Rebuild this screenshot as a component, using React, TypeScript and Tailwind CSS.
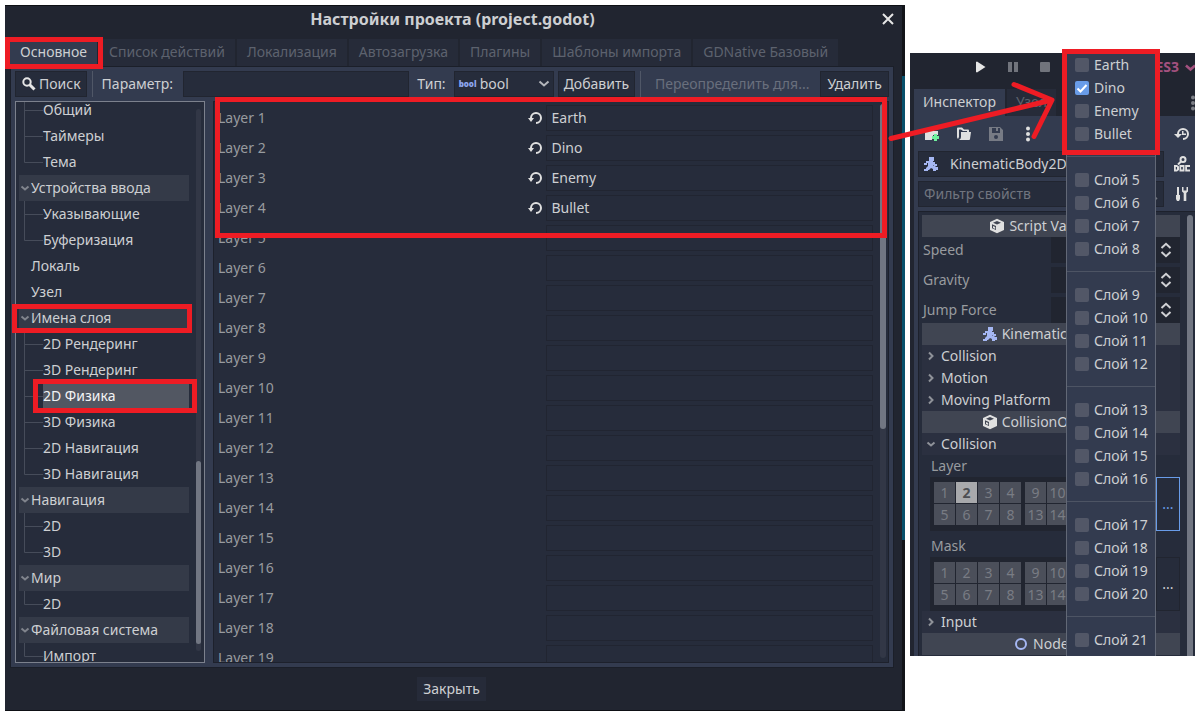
import { useState, type ReactNode } from "react";

type TreeRow = { name: string; level: 1 | 2; group?: boolean; last?: boolean; selected?: boolean };

const TABS = ["Основное", "Список действий", "Локализация", "Автозагрузка", "Плагины", "Шаблоны импорта", "GDNative Базовый"];

const TREE: TreeRow[] = [
  { name: "Общий", level: 2 },
  { name: "Таймеры", level: 2 },
  { name: "Тема", level: 2, last: true },
  { name: "Устройства ввода", level: 1, group: true },
  { name: "Указывающие", level: 2 },
  { name: "Буферизация", level: 2, last: true },
  { name: "Локаль", level: 1 },
  { name: "Узел", level: 1 },
  { name: "Имена слоя", level: 1, group: true },
  { name: "2D Рендеринг", level: 2 },
  { name: "3D Рендеринг", level: 2 },
  { name: "2D Физика", level: 2, selected: true },
  { name: "3D Физика", level: 2 },
  { name: "2D Навигация", level: 2 },
  { name: "3D Навигация", level: 2, last: true },
  { name: "Навигация", level: 1, group: true },
  { name: "2D", level: 2 },
  { name: "3D", level: 2, last: true },
  { name: "Мир", level: 1, group: true },
  { name: "2D", level: 2, last: true },
  { name: "Файловая система", level: 1, group: true },
  { name: "Импорт", level: 2, last: true },
];

const LAYER_NAMES = ["Earth", "Dino", "Enemy", "Bullet"];
const LAYERS = Array.from({ length: 19 }, (_, i) => LAYER_NAMES[i] ?? "");
const POPUP_GROUPS = [
  LAYER_NAMES,
  ["Слой 5", "Слой 6", "Слой 7", "Слой 8"],
  ["Слой 9", "Слой 10", "Слой 11", "Слой 12"],
  ["Слой 13", "Слой 14", "Слой 15", "Слой 16"],
  ["Слой 17", "Слой 18", "Слой 19", "Слой 20"],
  ["Слой 21"],
];

function Icon({ children, className = "" }: { children: ReactNode; className?: string }) {
  return (
    <svg viewBox="0 0 16 16" aria-hidden="true" className={`size-4 shrink-0 fill-current ${className}`}>
      {children}
    </svg>
  );
}

const Reload = () => (
  <Icon className="text-[#e0e0e0]">
    <path d="M9 2a6 6 0 0 0-6 6H1l3 4 3-4H5a4 4 0 1 1 4 4v2A6 6 0 0 0 9 2z" />
  </Icon>
);

const Cube = () => (
  <Icon className="text-[#e0e0e0]">
    <path fillRule="evenodd" d="M8 .8 1 4v8l7 3.200 7-3.200V4zM8 3l4 1.800L8 6.500 4 4.800zM3 6.300l4 1.800V12l-4-1.800z" />
    <path d="M4 8l2.200 1v2L4 10z" />
  </Icon>
);

const Runner = () => (
  <Icon className="text-[#a5b7f3]">
    <path d="M6 1h5v4H6zM3 5h7v1h2v2h2v2h-3l-1-1v1h2l1 1h2v3h-2v1h-3v-2l-2-1-2 2H5v1H1v-2h2v-1l2-2V7H4v2H1V7h2z" />
  </Icon>
);

const Dots = ({ className }: { className: string }) => (
  <Icon className={className}>
    <circle cx="8" cy="2.500" r="2" />
    <circle cx="8" cy="8" r="2" />
    <circle cx="8" cy="13.500" r="2" />
  </Icon>
);

function Chevron({ dir, className = "" }: { dir: "down" | "right"; className?: string }) {
  return (
    <svg viewBox="0 0 10 10" aria-hidden="true" className={`size-[10px] shrink-0 fill-none stroke-current stroke-2 ${className}`}>
      <path d={dir === "down" ? "M1.500 3.500 5 6.500l3.500-3" : "M3 1.500 6.500 5 3 8.500"} />
    </svg>
  );
}

function Tree() {
  return (
    <nav aria-label="Разделы" className="flex w-[190px] shrink-0 overflow-hidden border border-[#7c818d] bg-[#262c3b] pl-[3px]">
      <ul className="-mt-[5px] flex-1">
        {TREE.map((row, i) => (
          <li key={i} className={`flex h-[26px] items-center ${row.group ? "bg-[#343a48]" : ""}`}>
            {row.level === 1 ? (
              <span className="flex w-3 shrink-0 justify-center text-[#80848d]">{row.group && <Chevron dir="down" />}</span>
            ) : (
              <svg viewBox="0 0 24 26" aria-hidden="true" className="h-[26px] w-6 shrink-0 fill-none stroke-[#464c5a]">
                <path d={row.last ? "M5.500 0V13.500H24" : "M5.500 0V26M5.500 13.500H24"} />
              </svg>
            )}
            <a
              href="#layers"
              className={`flex h-full flex-1 items-center whitespace-nowrap ${row.selected ? "bg-[#525762] text-[#f2f3f5]" : ""}`}
            >
              {row.name}
            </a>
          </li>
        ))}
      </ul>
      <div className="mt-[7px] mr-[3px] mb-[11px] ml-[7px] flex w-[5px] flex-col rounded-full bg-[#323746]">
        <div className="flex-[353]" />
        <div className="flex-[183] rounded-full bg-[#717682]" />
        <div className="flex-[7]" />
      </div>
    </nav>
  );
}

function SettingsDialog() {
  const button = "flex h-[26px] items-center border border-[#212530] bg-[#262c3b] whitespace-nowrap";
  return (
    <section aria-label="Настройки проекта" className="flex min-w-0 flex-1 flex-col border-y border-[#0e1015] bg-[#212530]">
      <header className="flex h-[33px] items-start pt-px">
        <span className="w-6" />
        <h1 className="flex-1 pr-1 text-center text-base leading-[25px] font-bold">Настройки проекта (project.godot)</h1>
        <button aria-label="Закрыть окно" className="mr-[6px] flex h-[23px] w-4 items-center justify-center">
          <Icon className="text-[#e6e6e6]">
            <path d="m3 3 10 10M13 3 3 13" className="fill-none stroke-current stroke-2" />
          </Icon>
        </button>
      </header>
      <div role="tablist" className="ml-[5px] flex gap-[2px]">
        {TABS.map((tab, i) => (
          <button
            key={tab}
            role="tab"
            aria-selected={i === 0}
            className={`h-[27px] px-[10px] pb-px whitespace-nowrap ${i === 0 ? "bg-[#333b4f]" : "bg-[#262b39] text-[#5d626e]"}`}
          >
            {tab}
          </button>
        ))}
      </div>
      <div className="mr-2 ml-[5px] flex min-h-0 flex-1 flex-col gap-1 border border-[#1b1f29] bg-[#333b4f] p-1">
        <div className="flex items-center">
          <button className={`${button} gap-[2px] px-[5px]`}>
            <Icon className="text-[#e6e6e6]">
              <circle cx="6" cy="6" r="3.700" className="fill-none stroke-current stroke-2" />
              <path d="m8.500 8.500 5 5" className="fill-none stroke-current stroke-3" />
            </Icon>
            Поиск
          </button>
          <span className="mx-[5px] h-[26px] w-px bg-[#505767]" />
          <label htmlFor="param" className="pr-[10px] pl-1">Параметр:</label>
          <input id="param" className="h-[26px] min-w-0 flex-1 border border-[#212530] bg-[#262c3b] px-1 outline-none" />
          <label htmlFor="type" className="px-2">Тип:</label>
          <div className="relative">
            <select id="type" className="h-[26px] w-[100px] appearance-none border border-[#212530] bg-[#262c3b] pl-[25px] outline-none">
              <option>bool</option>
            </select>
            <span aria-hidden="true" className="pointer-events-none absolute top-[6px] left-[5px] text-[8px] leading-[14px] font-black text-[#8da6f0]">bool</span>
            <svg viewBox="0 0 12 8" aria-hidden="true" className="pointer-events-none absolute top-[9px] right-1 h-2 w-3 fill-none stroke-[#b4b6bb] stroke-2">
              <path d="m1.500 1.500 4.500 4 4.500-4" />
            </svg>
          </div>
          <button className={`${button} ml-1 px-[5px]`}>Добавить</button>
          <span className="mx-[5px] h-[26px] w-px bg-[#505767]" />
          <button disabled className="px-[9px] whitespace-nowrap text-[#696f7d]">Переопределить для...</button>
          <button className={`${button} ml-[2px] px-[6px]`}>Удалить</button>
        </div>
        <div className="flex min-h-0 flex-1 gap-2">
          <Tree />
          <div id="layers" className="flex min-w-0 flex-1 overflow-hidden border border-[#1d212c] bg-[#262c3b] pl-1">
            <div className="flex flex-1 flex-col gap-1 pt-[3px]">
              {LAYERS.map((name, i) => (
                <div key={i} className="grid shrink-0 grid-cols-2 items-center">
                  <div className="flex items-center justify-between pr-[3px]">
                    <label htmlFor={`layer-${i}`} className="text-[#989b9f]">Layer {i + 1}</label>
                    {name && (
                      <button aria-label={`Сбросить ${name}`}>
                        <Reload />
                      </button>
                    )}
                  </div>
                  <input id={`layer-${i}`} defaultValue={name} className="h-[26px] w-full min-w-0 border border-[#212531] bg-transparent px-[5px] pb-[2px] outline-none" />
                </div>
              ))}
            </div>
            <div className="mt-[2px] mr-[2px] mb-1 ml-[7px] flex w-[6px] flex-col rounded-full bg-[#323746]">
              <div className="flex-[325] rounded-full bg-[#717682]" />
              <div className="flex-[229]" />
            </div>
          </div>
        </div>
      </div>
      <footer className="flex h-[42px] items-center justify-center pr-1">
        <button className="h-6 bg-[#262b39] px-[6px]">Закрыть</button>
      </footer>
    </section>
  );
}

function SectionHeader({ icon, children }: { icon: ReactNode; children: ReactNode }) {
  return (
    <h2 className="flex h-[22px] items-center justify-center gap-1 bg-[#404552] pr-[2px] whitespace-nowrap">
      {icon}
      {children}
    </h2>
  );
}

function Fold({ open, children }: { open?: boolean; children: ReactNode }) {
  return (
    <button aria-expanded={!!open} className="flex h-[22px] w-full items-center gap-[5px] bg-[#2b3040] pl-1">
      <Chevron dir={open ? "down" : "right"} className="text-[#8f9299]" />
      {children}
    </button>
  );
}

function BitCell({ bit, on }: { bit: number; on: boolean }) {
  return (
    <button
      aria-pressed={on}
      className={`size-[21px] leading-[21px] ${on ? "bg-[#a8a9ac] font-bold text-[#4c4e53]" : "bg-[#4b4f5a] text-[#797c84]"}`}
    >
      {bit}
    </button>
  );
}

function BitGrid({ label, selected, active }: { label: string; selected?: number; active?: boolean }) {
  return (
    <div className="pl-2">
      <div className="h-[22px] pl-px text-[#989b9f]">{label}</div>
      <div className="flex h-[54px] justify-between bg-[#212530]">
        <div className="flex gap-1 pt-[5px] pl-1">
          <div className="grid h-[43px] grid-cols-4 gap-px">
            {[1, 2, 3, 4, 5, 6, 7, 8].map((bit) => (
              <BitCell key={bit} bit={bit} on={bit === selected} />
            ))}
          </div>
          <div className="grid h-[43px] grid-cols-2 gap-px">
            {[9, 10, 13, 14].map((bit) => (
              <BitCell key={bit} bit={bit} on={bit === selected} />
            ))}
          </div>
        </div>
        <button className={`w-6 shrink-0 border bg-[#262c3b] ${active ? "border-[#699ce8] text-[#699ce8]" : "border-[#212530]"}`}>
          ...
        </button>
      </div>
    </div>
  );
}

function Inspector() {
  const [checked, setChecked] = useState<string[]>(["Dino"]);
  const toggle = (name: string) =>
    setChecked((list) => (list.includes(name) ? list.filter((n) => n !== name) : [...list, name]));

  return (
    <aside className="relative mt-12 flex h-[603px] w-[285px] shrink-0 flex-col overflow-hidden bg-[#212530]">
      <div className="flex h-9 shrink-0 items-center pb-2 pl-[62px]">
        <button aria-label="Запустить"><Icon className="text-[#e6e6e6]"><path d="M4 3v10l1 .5L13.500 8 5 2.500z" /></Icon></button>
        <button aria-label="Пауза" className="ml-[17px]"><Icon className="text-[#71747c]"><path d="M3 3h4v10H3zM9 3h4v10H9z" /></Icon></button>
        <button aria-label="Остановить" className="ml-4"><Icon className="text-[#71747c]"><rect x="3" y="3" width="10" height="10" rx="1" /></Icon></button>
        <button className="ml-auto flex items-center gap-[5px] font-bold text-[#a3517f]">
          GLES3
          <Chevron dir="down" className="-mr-[2px] size-[13px]" />
        </button>
      </div>
      <div role="tablist" className="flex h-[27px] shrink-0 items-stretch gap-[2px] pl-1">
        <button role="tab" aria-selected="true" className="bg-[#333b4f] px-[9px] pb-px">Инспектор</button>
        <button role="tab" aria-selected="false" className="bg-[#262b39] px-[9px] pb-px text-[#5d626e]">Узел</button>
        <button aria-label="Настройки панели" className="-mr-[6px] ml-auto"><Dots className="text-[#7c7f86]" /></button>
      </div>
      <div className="ml-1 flex min-h-0 flex-1 flex-col gap-1 bg-[#333b4f] pl-1">
        <div className="flex h-[31px] items-center pt-1 pr-[5px] pl-[6px]">
          <button aria-label="Создать ресурс">
            <Icon className="text-[#e0e0e0]">
              <path d="M2 2h7l1 3h4v4h-5v2H8v3H1V3z" />
              <path d="M10 8h3v2h2v3h-2v2h-3v-2H8v-3h2z" className="fill-[#6fef9d]" />
            </Icon>
          </button>
          <button aria-label="Открыть ресурс" className="ml-4">
            <Icon className="text-[#e0e0e0]">
              <path d="M2 1.500h4l2 2h4q1 0 1 1V6h-2V5H7L5 3.500H3V11l-1 2q-1-1-1-2V2.500q0-1 1-1z" />
              <path d="M5 6h10l-1 7q0 1-1 1H3q2-1 2-3z" />
            </Icon>
          </button>
          <button aria-label="Сохранить ресурс" className="ml-4">
            <Icon className="text-[#777b85]"><path fillRule="evenodd" d="M1 1h11l3 3v11H1zM4 2v5h8V2h-2v3H8V2zM8 9a2 2 0 1 0 0 4 2 2 0 0 0 0-4z" /></Icon>
          </button>
          <button aria-label="Ещё" className="ml-4">
            <Dots className="text-[#e0e0e0]" />
          </button>
          <button aria-label="История" className="ml-auto">
            <Icon className="text-[#e0e0e0]"><path d="M9 2a6 6 0 0 0-6 6H0l4 4 4-4H5a4 4 0 1 1 4 4v2A6 6 0 0 0 9 2zM8 5v4h4V7.500H9.500V5z" /></Icon>
          </button>
        </div>
        <div className="flex items-center">
          <button className="flex h-[26px] w-[246px] items-center gap-[11px] border border-[#212530] bg-[#262c3b] pl-1">
            <Runner />
            KinematicBody2D
          </button>
          <button aria-label="Документация" className="ml-[10px]">
            <Icon className="text-[#e0e0e0]">
              <circle cx="9" cy="3.500" r="2.500" className="fill-none stroke-current stroke-2" />
              <path d="M7 5.500 4 8.500" className="fill-none stroke-current stroke-2" />
              <path fillRule="evenodd" d="M0 9h3l2 1.500V14l-2 1.500H0zM1.800 11v2.500H3V11zM5.500 9h5v6.500h-5zM7.200 11v2.500h1.600V11zM11.200 9H16v2h-3v2.500h3v2h-4.800z" />
            </Icon>
          </button>
        </div>
        <div className="flex items-center">
          <div className="relative">
            <input aria-label="Фильтр свойств" placeholder="Фильтр свойств" className="h-[26px] w-[246px] border border-[#212530] bg-[#262c3b] px-[5px] pb-[2px] outline-none placeholder:text-[#71757f]" />
            <Icon className="absolute top-[5px] right-[5px] text-[#71757f]">
              <circle cx="6" cy="6" r="3.700" className="fill-none stroke-current stroke-2" />
              <path d="m8.500 8.500 5 5" className="fill-none stroke-current stroke-3" />
            </Icon>
          </div>
          <button aria-label="Инструменты" className="ml-[10px]">
            <Icon className="text-[#e0e0e0]"><path d="M3 1h2v8h1v4l-1 2H3l-1-2V9h1zM8 1h1.500v3.500h3V1H14v4.500L12.300 7v8H9.700V7L8 5.500z" /></Icon>
          </button>
        </div>
        <div className="flex min-h-0 flex-1 overflow-hidden border-t border-l border-[#1d212c] bg-[#262c3b] pt-[3px] pl-[3px]">
          <div className="w-[258px] shrink-0">
            <SectionHeader icon={<Cube />}>Script Variables</SectionHeader>
            <div className="flex flex-col gap-1">
              {["Speed", "Gravity", "Jump Force"].map((name) => (
                <label key={name} className="grid h-[26px] grid-cols-2 items-center text-[#989b9f]">
                  <span className="pl-px">{name}</span>
                  <span className="relative">
                    <input className="h-[26px] w-full bg-[#212530] px-1 outline-none" />
                    <svg viewBox="0 0 12 16" aria-hidden="true" className="absolute top-[5px] right-2 h-4 w-3 fill-none stroke-[#d0d1d4] stroke-2">
                      <path d="M1.500 6 6 1.800 10.500 6M1.500 10 6 14.200 10.500 10" />
                    </svg>
                  </span>
                </label>
              ))}
            </div>
            <SectionHeader icon={<Runner />}>KinematicBody2D</SectionHeader>
            <Fold>Collision</Fold>
            <Fold>Motion</Fold>
            <Fold>Moving Platform</Fold>
            <SectionHeader icon={<Cube />}>CollisionObject2D</SectionHeader>
            <Fold open>Collision</Fold>
            <div className="flex flex-col gap-1">
              <BitGrid label="Layer" selected={2} active />
              <BitGrid label="Mask" />
            </div>
            <Fold>Input</Fold>
            <SectionHeader icon={<Icon className="text-[#a5b7f3]"><circle cx="8" cy="8" r="5" className="fill-none stroke-current stroke-2" /></Icon>}>
              Node2D
            </SectionHeader>
          </div>
          <div className="ml-[7px] w-[6px] shrink-0 rounded-t-full bg-[#717682]" />
        </div>
      </div>
      <div className="absolute inset-y-0 right-[39px] w-[90px] overflow-hidden border-x border-[#626876] bg-[#333b4f]">
        {POPUP_GROUPS.map((group, g) => (
          <div key={group[0]}>
            {g > 0 && (
              <div className="flex h-[23px] items-center">
                <hr className="w-full border-[#4d5464]" />
              </div>
            )}
            {group.map((name) => (
              <label key={name} className="flex h-[23px] items-center gap-[5px] pl-2 whitespace-nowrap">
                <span className="relative flex size-[14px]">
                  <input
                    type="checkbox"
                    checked={checked.includes(name)}
                    onChange={() => toggle(name)}
                    className="size-[14px] appearance-none rounded-[2px] bg-[#525767] checked:bg-[#699ce8]"
                  />
                  {checked.includes(name) && (
                    <svg viewBox="0 0 14 14" aria-hidden="true" className="pointer-events-none absolute inset-0 fill-none stroke-white stroke-2">
                      <path d="m2.500 7.500 3 3 6-6.500" />
                    </svg>
                  )}
                </span>
                {name}
              </label>
            ))}
          </div>
        ))}
      </div>
    </aside>
  );
}

function Annotations() {
  return (
    <svg aria-hidden="true" className="pointer-events-none absolute top-0 left-0 h-[717px] w-[1204px] fill-none stroke-[#ee1c24] stroke-[5]">
      <rect x="7.500" y="39.500" width="93" height="27" />
      <rect x="217.500" y="99.500" width="667" height="136" />
      <rect x="14.500" y="306.500" width="175" height="24" />
      <rect x="35.500" y="381.500" width="159" height="29" />
      <rect x="1064.500" y="51.500" width="93" height="101" />
      <path d="M891 138.500 1052 100M1014 84.500 1052 100 1034 136.500" strokeLinecap="round" strokeLinejoin="round" />
    </svg>
  );
}

export default function App() {
  return (
    <main className="relative flex h-screen items-stretch bg-white pt-[5px] pr-[9px] pb-[6px] pl-[5px] font-['Noto_Sans',sans-serif] text-sm leading-[22px] text-[#cdcfd2]">
      <SettingsDialog />
      <div className="mr-[5px] flex w-[3px] shrink-0 flex-col bg-[#121419]">
        <div className="mt-[71px] h-[464px] bg-[#07506b]" />
      </div>
      <Inspector />
      <Annotations />
    </main>
  );
}
